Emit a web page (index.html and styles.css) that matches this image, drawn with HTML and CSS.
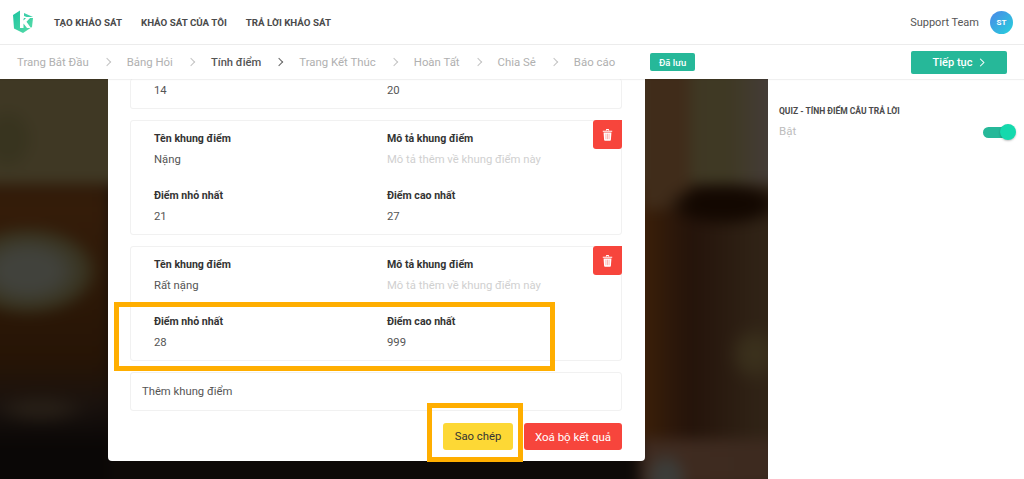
FILE: index.html
```html
<!DOCTYPE html>
<html lang="vi">
<head>
<meta charset="utf-8">
<title>Tính điểm</title>
<link rel="stylesheet" href="styles.css">
</head>
<body>
<header class="topbar">
  <svg class="logo" viewBox="0 0 20 23" width="20" height="23" aria-hidden="true">
    <defs><linearGradient id="lg" x1="0" y1="0" x2="1" y2="1"><stop offset="0" stop-color="#1cc4a0"/><stop offset="1" stop-color="#5adca8"/></linearGradient></defs>
    <path d="M0 5 L7 0.5 V13 L11 8 L20 8 L19 17 L10 23 L1 18.5 Z" fill="url(#lg)"/>
    <path d="M11 3 L20 7 L13.5 7 L11 6 Z" fill="#3fd0ab"/>
    <path d="M7 0.5 L10.5 2.5 V10.5 L14 7 H18 L13.5 11.8 L18 18 H14 L10.5 13.4 V18 H7 Z" fill="#fff"/>
  </svg>
  <nav class="mainnav">
    <a>TẠO KHẢO SÁT</a>
    <a>KHẢO SÁT CỦA TÔI</a>
    <a>TRẢ LỜI KHẢO SÁT</a>
  </nav>
  <div class="user">
    <span class="username">Support Team</span>
    <span class="avatar">ST</span>
  </div>
</header>
<div class="stepbar">
  <ol class="steps">
    <li>Trang Bắt Đầu</li><li class="sep"></li>
    <li>Bảng Hỏi</li><li class="sep"></li>
    <li class="current">Tính điểm</li><li class="sep dark"></li>
    <li>Trang Kết Thúc</li><li class="sep"></li>
    <li>Hoàn Tất</li><li class="sep"></li>
    <li>Chia Sẻ</li><li class="sep"></li>
    <li>Báo cáo</li>
  </ol>
  <span class="saved">Đã lưu</span>
  <button class="next">Tiếp tục <svg viewBox="0 0 8 12" width="6" height="9" aria-hidden="true"><path d="M1.5 1 L6.5 6 L1.5 11" fill="none" stroke="#fff" stroke-width="1.4"/></svg></button>
</div>
<main class="workspace">
  <section class="stage">
    <div class="backdrop"></div>
    <div class="card">
      <div class="tier tier-cut">
        <div class="cell"><p class="value">14</p></div>
        <div class="cell"><p class="value">20</p></div>
      </div>
      <div class="tier">
        <button class="trash" aria-label="Xoá"><svg viewBox="0 0 14 16" width="11" height="13"><path d="M1 3.2 H13 V4.6 H1 Z M4.8 3 L5.4 1 H8.6 L9.2 3 H8 L7.9 2.2 H6.1 L6 3 Z M2 5.4 H12 L11.3 15 Q11.2 16 10.2 16 H3.8 Q2.8 16 2.7 15 Z" fill="#fff"/><path d="M5 7 V14 M7 7 V14 M9 7 V14" stroke="#f9a59f" stroke-width="1"/></svg></button>
        <div class="cell"><h4>Tên khung điểm</h4><p class="value">Nặng</p></div>
        <div class="cell"><h4>Mô tả khung điểm</h4><p class="value hint">Mô tả thêm về khung điểm này</p></div>
        <div class="cell"><h4>Điểm nhỏ nhất</h4><p class="value">21</p></div>
        <div class="cell"><h4>Điểm cao nhất</h4><p class="value">27</p></div>
      </div>
      <div class="tier">
        <button class="trash" aria-label="Xoá"><svg viewBox="0 0 14 16" width="11" height="13"><path d="M1 3.2 H13 V4.6 H1 Z M4.8 3 L5.4 1 H8.6 L9.2 3 H8 L7.9 2.2 H6.1 L6 3 Z M2 5.4 H12 L11.3 15 Q11.2 16 10.2 16 H3.8 Q2.8 16 2.7 15 Z" fill="#fff"/><path d="M5 7 V14 M7 7 V14 M9 7 V14" stroke="#f9a59f" stroke-width="1"/></svg></button>
        <div class="cell"><h4>Tên khung điểm</h4><p class="value">Rất nặng</p></div>
        <div class="cell"><h4>Mô tả khung điểm</h4><p class="value hint">Mô tả thêm về khung điểm này</p></div>
        <div class="cell"><h4>Điểm nhỏ nhất</h4><p class="value">28</p></div>
        <div class="cell"><h4>Điểm cao nhất</h4><p class="value">999</p></div>
      </div>
      <div class="add">Thêm khung điểm</div>
      <div class="actions">
        <button class="btn copy">Sao chép</button>
        <button class="btn remove">Xoá bộ kết quả</button>
      </div>
    </div>
    <div class="mark mark-range"></div>
    <div class="mark mark-copy"></div>
  </section>
  <aside class="side">
    <h5>QUIZ - TÍNH ĐIỂM CÂU TRẢ LỜI</h5>
    <div class="toggle-row">
      <span class="state">Bật</span>
      <span class="switch"><span class="knob"></span></span>
    </div>
  </aside>
</main>
</body>
</html>
```
FILE: styles.css
```css
* { box-sizing: border-box; }
html, body { margin: 0; height: 100%; }
body {
  width: 1024px;
  height: 479px;
  overflow: hidden;
  background: #fff;
  color: #4a4a4a;
  font-family: Roboto, "Liberation Sans", sans-serif;
}
button { font-family: inherit; border: 0; }

.topbar {
  height: 45px;
  display: flex;
  align-items: center;
  padding: 0 11px 0 13px;
  border-bottom: 1px solid #ececec;
}
.logo { flex: none; margin-top: -1px; }
.mainnav {
  display: flex;
  gap: 19px;
  margin-left: 21px;
  font-size: 9.75px;
  font-weight: 700;
  color: #4a4a4a;
}
.user { margin-left: auto; display: flex; align-items: center; gap: 11px; }
.username { font-size: 11px; color: #555; }
.avatar {
  width: 23px;
  height: 23px;
  border-radius: 50%;
  display: flex;
  align-items: center;
  justify-content: center;
  background: linear-gradient(135deg, #4a86e8, #26d3dc);
  color: #fff;
  font-size: 8px;
  font-weight: 700;
}

.stepbar {
  height: 34px;
  display: flex;
  align-items: center;
  padding: 0 17px 0 17px;
  box-shadow: 0 1px 1px rgba(0,0,0,.06);
  position: relative;
  z-index: 1;
}
.steps {
  display: flex;
  align-items: center;
  list-style: none;
  margin: 0;
  padding: 0;
  font-size: 11.4px;
  color: #b0b0b0;
}
.steps .sep {
  width: 38px;
  display: flex;
  justify-content: center;
  padding-right: 2px;
}
.steps .sep::before {
  content: "";
  width: 5px;
  height: 5px;
  border-top: 1px solid #c4c4c4;
  border-right: 1px solid #c4c4c4;
  transform: rotate(45deg);
}
.steps .sep.dark::before { border-color: #666; }
.steps .current { color: #555; font-weight: 500; font-size: 11.2px; }
.saved {
  margin-left: 35px;
  width: 45px;
  height: 18px;
  border-radius: 2px;
  background: #26b899;
  color: #fff;
  font-size: 9.5px;
  font-weight: 500;
  display: flex;
  align-items: center;
  justify-content: center;
}
.next {
  margin-left: auto;
  width: 96px;
  height: 23px;
  border-radius: 2px;
  background: #26b899;
  color: #fff;
  font-size: 11px;
  font-weight: 500;
  display: flex;
  align-items: center;
  justify-content: center;
  gap: 7px;
}

.workspace { height: 400px; display: flex; }
.stage {
  position: relative;
  width: 768px;
  flex: none;
  overflow: hidden;
  padding-left: 108px;
  background: #0d0907;
}
.backdrop {
  position: absolute;
  inset: -20px;
  filter: blur(7px);
  background:
    radial-gradient(ellipse 26px 32px at 28px 80px, #38341f 65%, transparent 100%),
    radial-gradient(ellipse 72px 46px at 48px 212px, #41423c 40%, #38331f 80%, transparent 100%),
    radial-gradient(ellipse 60px 22px at 745px 145px, #130801 65%, transparent 100%),
    radial-gradient(ellipse 28px 30px at 775px 295px, #3a301c 40%, transparent 100%),
    radial-gradient(ellipse 22px 28px at 686px 420px, #3c3d3a 55%, transparent 100%),
    radial-gradient(ellipse 50px 16px at 60px 350px, #261e16 40%, transparent 100%),
    linear-gradient(90deg, #402b20, #3c2a1f) 660px 380px / 140px 50px no-repeat,
    linear-gradient(180deg, #402c1a, #402c1a) 660px 0 / 50px 150px no-repeat,
    linear-gradient(90deg, #3f3824 700px, #3f3924 750px, #443c38 790px) 0 0 / 100% 125px no-repeat,
    linear-gradient(180deg, #3e2208 0, #2c1808 100px, #341c09 150px, #261405 300px, #1a120e 345px, #0a0706 385px) 0 0 / 130px 100% no-repeat,
    linear-gradient(180deg, #1f1a16, #14100e 100px, #0d0907) 80px 0 / 60px 100% no-repeat,
    linear-gradient(90deg, #3c2009 660px, #24130a 710px, #302316 780px) 0 0 / 100% 380px no-repeat,
    #0d0907;
}
.card {
  position: relative;
  width: 537px;
  height: 382px;
  background: #fff;
  border-radius: 0 0 4px 4px;
  padding: 0 23px 0 22px;
}
.tier {
  position: relative;
  height: 115px;
  margin-bottom: 11px;
  padding: 8px 0 0 23px;
  border: 1px solid #f1f1f1;
  border-radius: 3px;
  display: grid;
  grid-template-columns: 233px 1fr;
  grid-auto-rows: 57px;
  align-content: start;
}
.tier-cut {
  height: 30px;
  margin-bottom: 11px;
  border-top: 0;
  padding-top: 1px;
  grid-auto-rows: 24px;
}
.cell h4 {
  margin: 0;
  height: 20px;
  line-height: 20px;
  font-size: 10.6px;
  font-weight: 700;
  color: #333;
}
.cell .value {
  margin: 0;
  padding-top: 1px;
  line-height: 20px;
  font-size: 11.3px;
  color: #555;
}
.cell .value.hint { color: #d0d0d0; }
.trash {
  position: absolute;
  top: -1px;
  right: -1px;
  width: 29px;
  height: 29px;
  padding: 0;
  background: #f7453c;
  border-radius: 3px 0 3px 3px;
  display: flex;
  align-items: center;
  justify-content: center;
}
.add {
  height: 39px;
  padding-left: 11px;
  line-height: 38px;
  font-size: 11.25px;
  color: #555;
  border: 1px solid #f1f1f1;
  border-radius: 3px;
}
.actions {
  display: flex;
  justify-content: flex-end;
  gap: 11px;
  margin-top: 12px;
}
.btn {
  height: 27px;
  border-radius: 3px;
  font-size: 11.3px;
  padding: 0;
}
.copy { width: 70px; background: #fdd835; color: #333; }
.remove { width: 98px; background: #f7453c; color: #fff; font-size: 11.5px; }

.mark { position: absolute; border: 5px solid #ffae00; }
.mark-range { left: 114px; top: 223px; width: 441px; height: 69px; }
.mark-copy { left: 427px; top: 324px; width: 96px; height: 59px; }

.side { flex: 1; padding: 27px 12px 0 11px; }
.side h5 {
  margin: 0;
  font-size: 8.5px;
  line-height: 10px;
  font-weight: 700;
  color: #4a4a4a;
}
.toggle-row {
  display: flex;
  justify-content: space-between;
  align-items: center;
  margin-top: 5px;
}
.state { font-size: 11.5px; line-height: 20px; color: #bdbdbd; }
.switch {
  position: relative;
  display: block;
  width: 29px;
  height: 11px;
  margin-top: 2px;
  border-radius: 6px;
  background: #26b899;
}
.knob {
  position: absolute;
  right: -4px;
  top: -2.5px;
  width: 16px;
  height: 16px;
  border-radius: 50%;
  background: #14d9ad;
  box-shadow: 0 1px 2px rgba(0,0,0,.25);
}
```
